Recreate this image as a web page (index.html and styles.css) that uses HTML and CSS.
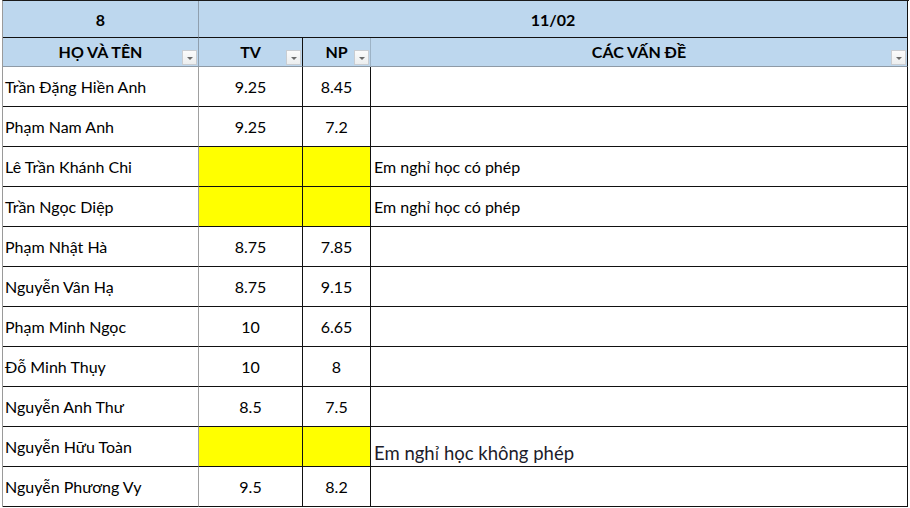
FILE: index.html
```html
<!DOCTYPE html>
<html lang="vi">
<head>
<meta charset="utf-8">
<title>Bảng điểm 11/02</title>
<link rel="stylesheet" href="styles.css">
</head>
<body>
<div class="sheet">
  <div class="cell h1 c-a">8</div>
  <div class="cell h1 c-span">11/02</div>

  <div class="cell h2 c-a"><span class="lbl">HỌ VÀ TÊN</span><span class="dd"></span></div>
  <div class="cell h2 c-b"><span class="lbl">TV</span><span class="dd"></span></div>
  <div class="cell h2 c-c"><span class="lbl">NP</span><span class="dd"></span></div>
  <div class="cell h2 c-d"><span class="lbl">CÁC VẤN ĐỀ</span><span class="dd"></span></div>

  <div class="cell row name">Trần Đặng Hiền Anh</div><div class="cell row num">9.25</div><div class="cell row num np">8.45</div><div class="cell row note"></div>
  <div class="cell row name">Phạm Nam Anh</div><div class="cell row num">9.25</div><div class="cell row num np">7.2</div><div class="cell row note"></div>
  <div class="cell row name">Lê Trần Khánh Chi</div><div class="cell row num hl"></div><div class="cell row num np hl"></div><div class="cell row note"><span>Em ngh<span class="vn">ỉ</span><span class="sp"> </span>học có phép</span></div>
  <div class="cell row name">Trần Ngọc Diệp</div><div class="cell row num hl"></div><div class="cell row num np hl"></div><div class="cell row note"><span>Em ngh<span class="vn">ỉ</span><span class="sp"> </span>học có phép</span></div>
  <div class="cell row name">Phạm Nhật Hà</div><div class="cell row num">8.75</div><div class="cell row num np">7.85</div><div class="cell row note"></div>
  <div class="cell row name">Nguyễn Vân Hạ</div><div class="cell row num">8.75</div><div class="cell row num np">9.15</div><div class="cell row note"></div>
  <div class="cell row name">Phạm Minh Ngọc</div><div class="cell row num">10</div><div class="cell row num np">6.65</div><div class="cell row note"></div>
  <div class="cell row name">Đỗ Minh Thụy</div><div class="cell row num">10</div><div class="cell row num np">8</div><div class="cell row note"></div>
  <div class="cell row name">Nguyễn Anh Thư</div><div class="cell row num">8.5</div><div class="cell row num np">7.5</div><div class="cell row note"></div>
  <div class="cell row name">Nguyễn Hữu Toàn</div><div class="cell row num hl"></div><div class="cell row num np hl"></div><div class="cell row note big"><span>Em ngh<span class="vn">ỉ</span><span class="sp"> </span>học không phép</span></div>
  <div class="cell row name">Nguyễn Phương Vy</div><div class="cell row num">9.5</div><div class="cell row num np">8.2</div><div class="cell row note"></div>
</div>
</body>
</html>
```
FILE: styles.css
```css
html, body {
  margin: 0;
  padding: 0;
  background: #ffffff;
}

body {
  font-family: Lato, "Open Sans", sans-serif;
  color: #000;
}

.sheet {
  margin-left: 2px;
  display: grid;
  grid-template-columns: 196px 104px 68px 537px;
  grid-template-rows: 37px 29px repeat(11, 40px);
  width: 906px;
  border-top: 1px solid #1a1a1a;
  border-left: 1px solid #9a9a9a;
}

.cell {
  box-sizing: border-box;
  border-right: 1px solid #111;
  border-bottom: 1px solid #111;
  display: flex;
  align-items: center;
  position: relative;
  font-size: 16px;
  min-width: 0;
  white-space: nowrap;
}

.vn {
  font-family: "Open Sans", "Noto Sans", sans-serif;
  font-size: 0.92em;
}

.sp {
  display: inline-block;
  width: 0.27em;
}

.h1, .h2 {
  background: #bdd7ee;
  font-weight: 700;
  justify-content: center;
}

.h1.c-a {
  border-right-color: #8f9fae;
}

.c-span {
  grid-column: 2 / span 3;
}

.h2 {
  border-bottom-color: #8e9aa6;
}

.h2.c-a {
  border-right-color: #8f9fae;
}

.h2.c-c {
  border-right-color: #9db3c6;
}

.h2 .lbl {
  margin-top: -1px;
}

.dd {
  position: absolute;
  right: 1px;
  bottom: 1px;
  width: 15px;
  height: 15px;
  box-sizing: border-box;
  border: 1px solid #c9cdd2;
  background: linear-gradient(#fbfbfb, #eceeef);
}

.dd::after {
  content: "";
  position: absolute;
  left: 4px;
  top: 6px;
  border-left: 3px solid transparent;
  border-right: 3px solid transparent;
  border-top: 3px solid #6b6b6b;
}

.row.name {
  border-right-color: #a0a0a0;
  padding-left: 2px;
}

.num {
  justify-content: center;
}

.hl {
  background: #ffff00;
}

.note {
  padding-left: 3px;
}

.note.big {
  font-size: 18.5px;
  align-items: flex-end;
  padding-bottom: 1px;
  color: #1c1c2a;
}
```
